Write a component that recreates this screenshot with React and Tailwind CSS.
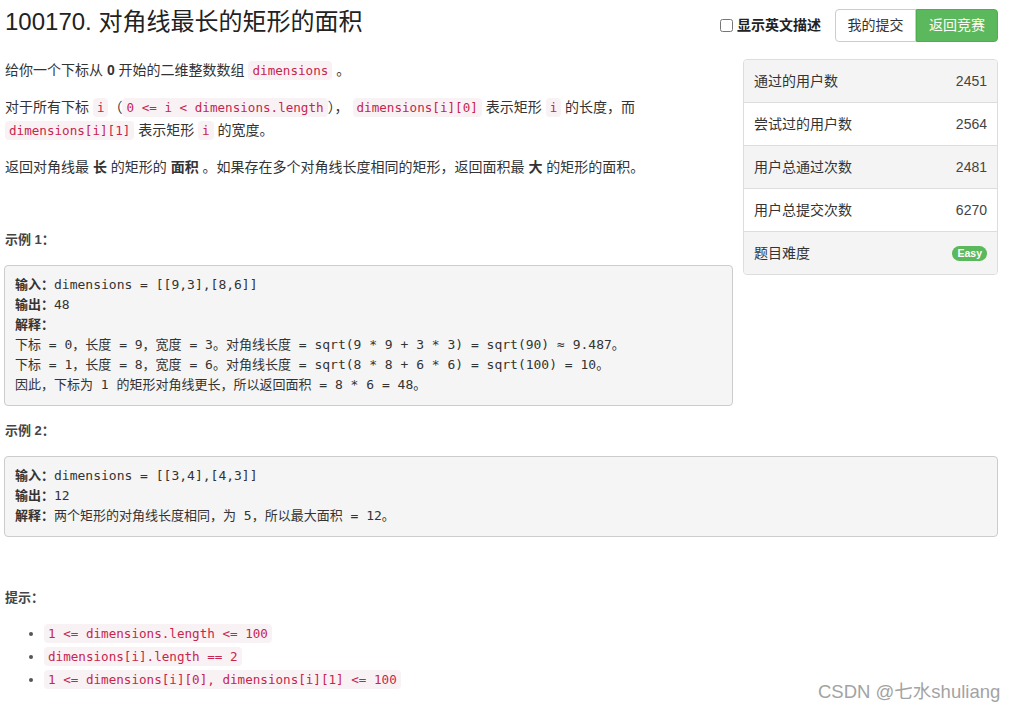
const sans = { fontFamily: '"Liberation Sans", "Noto Sans CJK SC", sans-serif' };

function Code({ children }) {
  return (
    <code className="rounded-[4px] bg-[#f9f2f4] px-[4px] py-[2px] font-['DejaVu_Sans_Mono','Noto_Sans_CJK_SC',monospace] text-[12.6px] text-[#c7254e]">
      {children}
    </code>
  );
}

const stats = [
  ['通过的用户数', '2451'],
  ['尝试过的用户数', '2564'],
  ['用户总通过次数', '2481'],
  ['用户总提交次数', '6270'],
];

const preCls =
  "overflow-auto whitespace-pre rounded-[4px] border border-[#ccc] bg-[#f5f5f5] px-[10px] py-[9.5px] font-['DejaVu_Sans_Mono','Noto_Sans_CJK_SC',monospace] text-[13px] leading-[20px] text-[#333]";

export default function App() {
  return (
    <div
      className="relative min-h-[712px] w-[1019px] bg-white px-[4px] text-[14px] text-[#333]"
      style={sans}
    >
      <div className="flex h-[59px] w-[994px] items-start justify-between">
        <h1 className="mt-[6px] pl-[1px] text-[24px] font-normal leading-[32px] text-[#222]">
          100170. 对角线最长的矩形的面积
        </h1>
        <div className="mt-[9px] flex items-center">
          <label className="mr-[14px] flex items-center gap-[4px] text-[14px] font-bold text-[#222]">
            <input type="checkbox" className="h-[13px] w-[13px]" />
            显示英文描述
          </label>
          <div className="flex">
            <button className="h-[33px] w-[81px] rounded-l-[4px] border border-[#ccc] bg-white text-[14px] text-[#333]">
              我的提交
            </button>
            <button className="h-[33px] w-[82px] rounded-r-[4px] border border-[#4cae4c] bg-[#5cb85c] text-[14px] text-white">
              返回竞赛
            </button>
          </div>
        </div>
      </div>

      <div className="w-[994px]">
        <div className="float-right ml-[10px] w-[255px] overflow-hidden rounded-[4px] border border-[#ddd]">
          {stats.map(([label, value], i) => (
            <div
              key={label}
              className={`flex h-[43px] items-center justify-between border-b border-[#ddd] px-[10px] ${
                i % 2 === 0 ? 'bg-[#f4f4f4]' : 'bg-white'
              }`}
            >
              <span>{label}</span>
              <span className="text-[#444]">{value}</span>
            </div>
          ))}
          <div className="flex h-[42px] items-center justify-between bg-[#f4f4f4] px-[10px]">
            <span>题目难度</span>
            <span className="rounded-full bg-[#5cb85c] px-[5px] pb-[2px] pt-[1px] text-[10.5px] font-bold leading-[12px] text-white">
              Easy
            </span>
          </div>
        </div>

        <p className="mb-[14px] pl-[1px] leading-[23px]">
          给你一个下标从 <strong>0</strong> 开始的二维整数数组 <Code>dimensions</Code> 。
        </p>
        <p className="mb-[14px] pl-[1px] leading-[23px]">
          对于所有下标 <Code>i</Code>（<Code>0 &lt;= i &lt; dimensions.length</Code>），{' '}
          <Code>dimensions[i][0]</Code> 表示矩形 <Code>i</Code> 的长度，而{' '}
          <Code>dimensions[i][1]</Code> 表示矩形 <Code>i</Code> 的宽度。
        </p>
        <p className="pl-[1px] leading-[23px]">
          返回对角线最 <strong>长</strong> 的矩形的 <strong>面积</strong>{' '}
          。如果存在多个对角线长度相同的矩形，返回面积最 <strong>大</strong> 的矩形的面积。
        </p>

        <p className="mt-[49px] pl-[1px] text-[13px] font-bold leading-[23px] text-[#444]">示例 1：</p>
        <pre className={`mt-[13.5px] ${preCls}`}>
          <strong>输入：</strong>dimensions = [[9,3],[8,6]]{'\n'}
          <strong>输出：</strong>48{'\n'}
          <strong>解释：</strong>{'\n'}
          下标 = 0，长度 = 9，宽度 = 3。对角线长度 = sqrt(9 * 9 + 3 * 3) = sqrt(90) ≈ 9.487。{'\n'}
          下标 = 1，长度 = 8，宽度 = 6。对角线长度 = sqrt(8 * 8 + 6 * 6) = sqrt(100) = 10。{'\n'}
          因此，下标为 1 的矩形对角线更长，所以返回面积 = 8 * 6 = 48。
        </pre>

        <p className="mt-[13.5px] pl-[1px] text-[13px] font-bold leading-[23px] text-[#444]">示例 2：</p>
        <pre className={`mt-[13.5px] ${preCls}`}>
          <strong>输入：</strong>dimensions = [[3,4],[4,3]]{'\n'}
          <strong>输出：</strong>12{'\n'}
          <strong>解释：</strong>两个矩形的对角线长度相同，为 5，所以最大面积 = 12。
        </pre>

        <p className="mt-[49.5px] pl-[1px] text-[13px] font-bold leading-[23px] text-[#444]">提示：</p>
        <ul className="mt-[13px] list-disc pl-[40px] leading-[23px] marker:text-[#555]">
          <li><Code>1 &lt;= dimensions.length &lt;= 100</Code></li>
          <li><Code>dimensions[i].length == 2</Code></li>
          <li><Code>1 &lt;= dimensions[i][0], dimensions[i][1] &lt;= 100</Code></li>
        </ul>
      </div>

      <div className="absolute left-[818px] top-[680px] text-[18.5px] leading-[24px] text-[#a3a3a3]">
        CSDN @七水shuliang
      </div>
    </div>
  );
}
